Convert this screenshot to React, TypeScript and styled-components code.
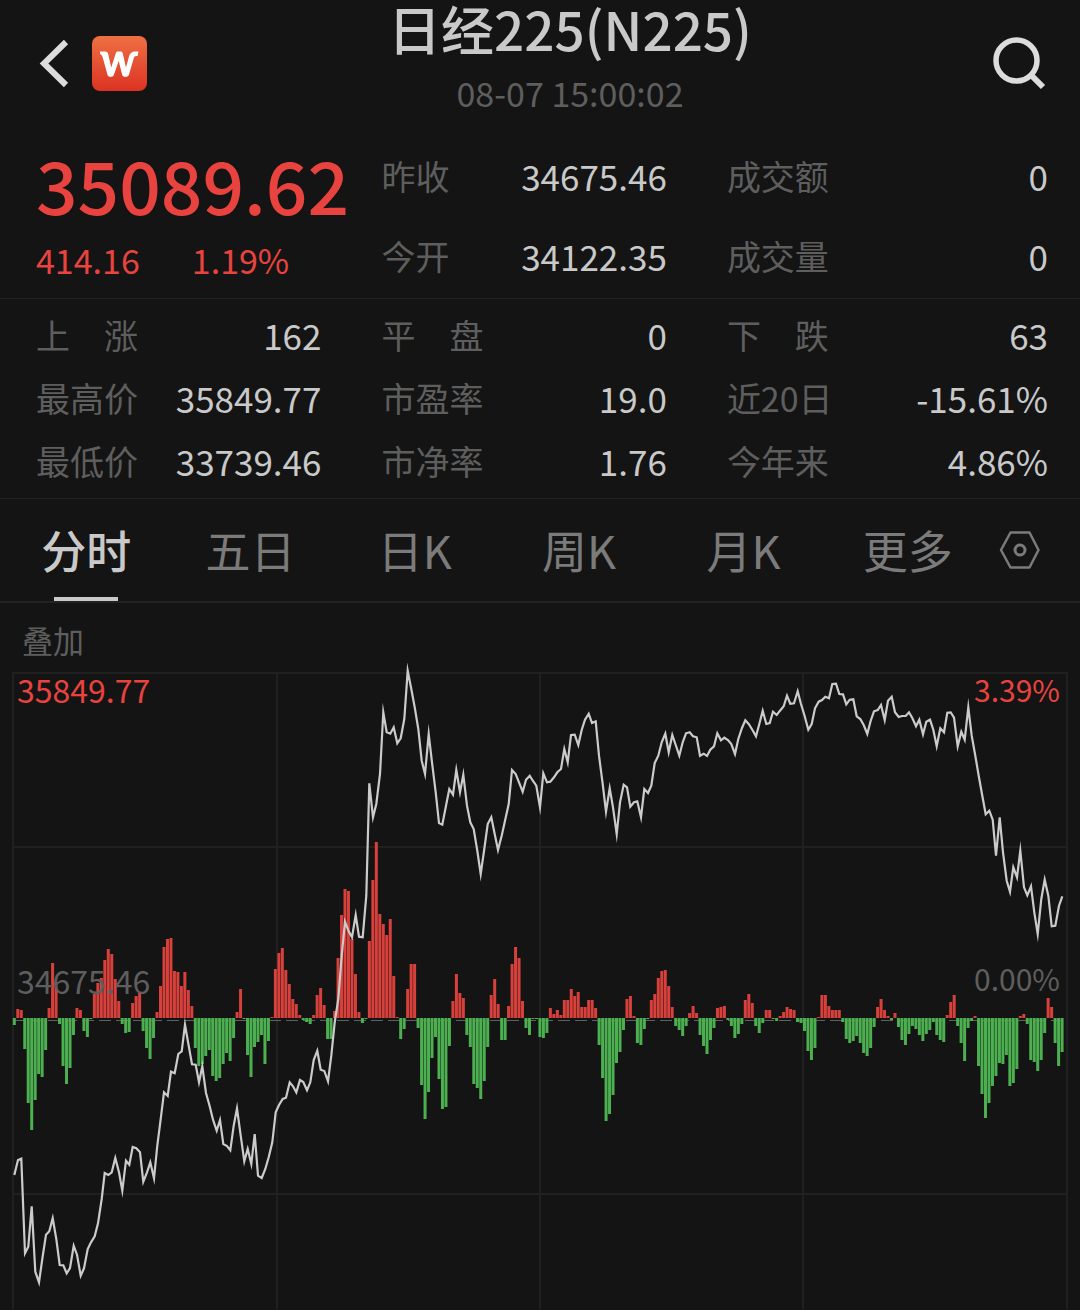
import React from 'react';
import styled, { createGlobalStyle } from 'styled-components';

const color = {
  bg: '#141414',
  line: '#222222',
  text: '#c9c9c9',
  icon: '#dcdcdc',
  tab: '#7b7b7b',
  label: '#5e5e5e',
  up: '#e8433f',
  bar: '#d8403b',
  down: '#4cb050',
};

const fontStack = '"Noto Sans CJK SC", "Noto Sans", sans-serif';

const GlobalStyle = createGlobalStyle`
  * { box-sizing: border-box; }
  body { margin: 0; background: ${color.bg}; }
  button {
    margin: 0;
    padding: 0;
    border: 0;
    background: none;
    color: inherit;
    font: inherit;
    cursor: pointer;
  }
`;

const Page = styled.main`
  background: ${color.bg};
  color: ${color.text};
  font-family: ${fontStack};
`;

const Header = styled.header`
  display: flex;
  align-items: center;
  padding: 0 32px 10px 36px;
`;

const IconButton = styled.button<{ $width: number }>`
  display: flex;
  flex: none;
  width: ${(p) => p.$width}px;
`;

const Heading = styled.div`
  display: grid;
  flex: 1;
  row-gap: 4px;
  text-align: center;
  white-space: nowrap;
`;

const Title = styled.h1`
  margin: 0;
  font-size: 53px;
  font-weight: 500;
  line-height: 56px;
`;

const Timestamp = styled.time`
  color: ${color.label};
  font-size: 34px;
  line-height: 66px;
`;

const Section = styled.section<{ $top: number; $bottom: number }>`
  display: grid;
  grid-template-columns: 8fr 8fr 9fr;
  column-gap: 60px;
  padding: ${(p) => p.$top}px 32px ${(p) => p.$bottom}px 36px;
  border-bottom: 1px solid ${color.line};
`;

const Quote = styled.div`
  display: grid;
  align-content: start;
  row-gap: 6px;
  min-width: 0;
  color: ${color.up};
  white-space: nowrap;
`;

const Price = styled.div`
  font-size: 73px;
  font-weight: 500;
  line-height: 94px;
`;

const Change = styled.div`
  display: flex;
  gap: 52px;
  font-size: 34px;
  line-height: 48px;
`;

const Stats = styled.dl<{ $row: number }>`
  min-width: 0;
  margin: 0;
  line-height: ${(p) => p.$row}px;
`;

const Stat = styled.div`
  display: flex;
  justify-content: space-between;
  white-space: nowrap;
`;

const StatName = styled.dt`
  color: ${color.label};
  font-size: 34px;
`;

const StatValue = styled.dd`
  margin: 0;
  font-size: 35px;
`;

const TabBar = styled.nav`
  display: flex;
  padding: 0 30px 0 4px;
  border-bottom: 2px solid ${color.line};
`;

const Tabs = styled.div`
  display: grid;
  flex: 1;
  grid-template-columns: repeat(6, 1fr);
`;

const Tab = styled.button<{ $active: boolean }>`
  position: relative;
  color: ${(p) => (p.$active ? color.text : color.tab)};
  font-size: 45px;
  font-weight: ${(p) => (p.$active ? 500 : 400)};
  line-height: 102px;
  white-space: nowrap;

  &::after {
    content: '';
    position: absolute;
    bottom: 0;
    left: calc(50% - 32px);
    width: 64px;
    height: 4px;
    background: ${(p) => (p.$active ? color.text : 'transparent')};
  }
`;

const SettingsButton = styled(IconButton)`
  align-items: center;
  justify-content: center;
`;

const Overlay = styled.button`
  display: block;
  margin-left: 22px;
  padding-top: 14px;
  color: ${color.label};
  font-size: 31px;
  line-height: 46px;
`;

const Chart = styled.svg`
  display: block;
  width: 100%;
  height: auto;
`;

const AxisText = styled.text<{ $tone: 'up' | 'flat'; $side: 'left' | 'right' }>`
  fill: ${(p) => (p.$tone === 'up' ? color.up : color.label)};
  font-size: ${(p) => (p.$side === 'left' ? 32 : 30)}px;
  text-anchor: ${(p) => (p.$side === 'left' ? 'start' : 'end')};
`;

type Pair = [string, string];

const dayStats: Pair[][] = [
  [['昨收', '34675.46'], ['今开', '34122.35']],
  [['成交额', '0'], ['成交量', '0']],
];

const indexStats: Pair[][] = [
  [['上　涨', '162'], ['最高价', '35849.77'], ['最低价', '33739.46']],
  [['平　盘', '0'], ['市盈率', '19.0'], ['市净率', '1.76']],
  [['下　跌', '63'], ['近20日', '-15.61%'], ['今年来', '4.86%']],
];

const periods = ['分时', '五日', '日K', '周K', '月K', '更多'];

/* Momentum bars, one per tick: positive above the previous close, negative below. */
const momentum = [
  -7, 9, 8, -31, -85, -112, -82, -56, -59, -32, 10, 55, 36, -6, -48, -66, -50, -17, 10, 8,
  -13, -19, 0, 24, 35, 40, 58, 69, 64, 39, 17, -6, -15, -14, 15, 22, 25, -13, -30, -41,
  -20, 6, 32, 71, 79, 80, 47, 46, 32, 46, 28, 12, -30, -48, -46, -38, -32, -58, -63, -60,
  -46, -35, -43, -20, 6, 29, 0, -37, -59, -29, -24, -17, -46, -23, 1, 49, 65, 70, 48, 34,
  19, 14, 3, -2, -4, -6, 3, 23, 30, 13, -21, -21, 7, 60, 103, 129, 127, 79, 44, 6,
  -5, 0, 77, 138, 176, 104, 94, 83, 99, 42, 1, -21, -11, 29, 54, 54, -10, -67, -101, -74,
  -40, -19, -61, -91, -89, -28, 17, 44, 25, 20, -17, -29, -66, -70, -81, -63, -29, 23, 39, 14,
  -22, -22, 12, 54, 71, 60, 17, -10, -17, -1, -1, -19, -20, -15, 10, 4, 8, 3, 18, 18,
  29, 22, 26, 11, 11, 18, 18, 10, -27, -60, -103, -96, -77, -45, -34, -12, 19, 22, 2, -25,
  -27, -11, -1, 18, 24, 40, 47, 48, 32, 11, -8, -12, -18, -8, 5, 12, 5, -17, -28, -36,
  -22, -10, 10, 11, 12, -2, -8, -20, -16, -6, 18, 24, 15, -8, -15, -5, 8, 8, -1, -3,
  2, 6, 11, 9, 8, -4, -5, -13, -33, -42, -30, 1, 23, 23, 12, 8, 8, 8, -4, -21,
  -25, -23, -18, -25, -35, -38, -30, -9, 11, 19, 8, 2, -2, 5, -9, -22, -27, -16, -8, -11,
  -17, -23, -16, -12, -4, -17, -22, -24, 3, 16, 23, -8, -25, -43, -10, -3, 2, -48, -76, -100,
  -85, -68, -58, -45, -46, -37, -68, -65, -51, 2, 4, -6, -42, -44, -53, -42, -15, 20, 11, -25,
  -48, -34,
];

/* Price trace in thirds of a chart unit, split into stretches that each have their own origin. */
const trace = [
  {
    x: 0,
    y: 286,
    points:
      '43,678 54,633 64,629 75,913 85,893 95,772 106,968 117,1000 127,930 138,857 148,847 158,808 169,870 179,948 190,949 200,973 210,957 221,890 231,917 242,980 252,958 263,900 273,880 284,862 294,823 305,750 314,672 325,678 335,670 346,627 357,670 367,725 378,635 388,647 398,594 409,598 420,610 430,698 441,670 451,640 462,688 472,590 482,510 492,430 503,441 513,368 524,373 535,315 545,307 555,227 566,290 576,346 587,347 597,400 607,352 618,432 629,472 639,512 650,545 660,513 670,585 681,591 691,604 701,530 711,478 722,560 733,637 743,600 754,645 764,555 774,680',
  },
  {
    x: 260,
    y: 216,
    points:
      '5,897 16,870 26,835 37,790 47,700 57,678 68,660 78,656 89,610 99,622 109,640 120,603 130,609 141,634 151,610 161,543 172,515 182,572 193,576 204,607 214,530 224,430 235,360 245,230 255,128 266,157 276,175 287,108 297,173',
  },
  {
    x: 260,
    y: -4,
    points:
      '308,835 319,710 328,373 339,475 349,435 360,345 370,160 380,220 391,224 401,205 412,253 422,238 433,180 443,35 454,90 464,145 475,210 485,305 495,345 506,225 516,310 527,400 537,492 547,497 558,440 568,390 579,407 589,333 600,400 610,347 621,440 631,490 641,510 652,575 662,645 673,570 683,495 694,475 704,525 714,573 725,530 735,485 746,435 756,333 767,345 777,370 788,398 798,362',
  },
  {
    x: 530,
    y: -4,
    points:
      '-1,350 9,366 19,380 30,445 40,343 51,370 61,368 72,355 82,340 93,330 103,270 113,310 123,228 134,227 145,258 155,213 165,182 176,164 186,192 197,187 207,290 218,375 228,458 239,388 249,445 260,525 270,430 281,377 291,385 301,443 312,430 322,427 333,475 343,390 354,402 364,380 374,312 385,290 395,250 406,224 416,280 427,228 437,258 448,290 458,250 468,223 479,220 489,232 500,235 510,290 521,284 531,291 541,272 552,262 562,223 573,244 583,236 594,243 604,255 615,285 625,240 636,207 646,184 656,195 667,212 678,232 688,195 698,155 709,195 719,192 729,158 740,168 750,155 761,142 771,110 781,134 792,133 803,97',
  },
  {
    x: 800,
    y: -4,
    points:
      '3,135 14,172 25,212 35,195 45,148 56,128 66,123 76,113 87,118 97,75 108,74 118,105 129,106 139,136 149,122 160,121 170,172 181,180 191,198 202,225 212,185 222,157 233,153 243,138 254,183 264,125 275,113 285,160 296,174 306,171 317,171 327,160 337,177 348,202 358,182 369,226 379,188 390,182 400,212 410,262 421,208 432,220 442,161 452,160 462,176 473,262 484,218 494,242 505,145 515,230 525,285 536,350 547,410 557,466 568,455 578,482 588,590 599,475 609,580 620,665 630,698 640,625 651,655 661,575 672,685 682,709 693,682 703,760 713,825 724,720 734,662 745,710 755,802 766,800 777,740 787,712',
  },
];

const priceLine = trace
  .flatMap((part) =>
    part.points.split(' ').map((pair) => {
      const [x, y] = pair.split(',').map(Number);
      return `${(part.x + x / 3).toFixed(1)},${(part.y + y / 3).toFixed(1)}`;
    }),
  )
  .join(' ');

const BASE = 355;
const FIRST_TICK = 14.3;
const TICK = 3.481;

function StatColumn({ items, row }: { items: Pair[]; row: number }) {
  return (
    <Stats $row={row}>
      {items.map(([name, value]) => (
        <Stat key={name}>
          <StatName>{name}</StatName>
          <StatValue>{value}</StatValue>
        </Stat>
      ))}
    </Stats>
  );
}

function BackIcon() {
  return (
    <svg width="36" height="56" viewBox="0 0 36 56" fill="none" stroke={color.icon} strokeWidth="6">
      <path d="M30 7 8 28.500 30 50" />
    </svg>
  );
}

function Logo() {
  return (
    <svg width="55" height="55" viewBox="0 0 55 55" fill="none" aria-hidden="true">
      <defs>
        <linearGradient id="logo" x1="0" y1="0" x2="0" y2="1">
          <stop offset="0" stopColor="#ee7043" />
          <stop offset="1" stopColor="#dc3323" />
        </linearGradient>
      </defs>
      <rect width="55" height="55" rx="8" fill="url(#logo)" />
      <path
        d="M8 15.500H13C15 15.500 15.800 16.500 16.200 18L19.200 31.500 23.700 17.500C24.200 16 25 15.500 26 15.500H28.500C29.800 15.500 30.400 16 30.800 17.500L34 31.500 37 20.500C38 17 40 15.500 43 15.500H46.500L45.500 20H44C42.800 20 42.200 20.700 41.800 22L37 38.500C36.500 40 35.700 40.700 34.500 40.700H32.500C31.200 40.700 30.500 40 30.100 38.500L26.700 25 22 38.500C21.500 40 20.700 40.700 19.500 40.700H17.800C16.500 40.700 15.800 40 15.400 38.500L10.600 21C10.200 19.500 9.500 18.500 8 18Z"
        fill="#fff"
      />
    </svg>
  );
}

function SearchIcon() {
  return (
    <svg width="55" height="56" viewBox="0 0 55 56" fill="none" stroke={color.icon}>
      <circle cx="23.500" cy="25.500" r="20.500" strokeWidth="5.500" />
      <path d="M38 40 50 52" strokeWidth="6" />
    </svg>
  );
}

function SettingsIcon() {
  return (
    <svg width="42" height="40" viewBox="0 0 42 40" fill="none" stroke={color.tab} strokeWidth="2.500">
      <path d="M11.500 2.500H30.500L39.500 20 30.500 37.500H11.500L2 20Z" strokeLinejoin="round" />
      <circle cx="21" cy="20" r="5" strokeWidth="3" />
    </svg>
  );
}

function PriceChart() {
  return (
    <Chart viewBox="0 0 1080 646" role="img" aria-label="分时走势">
      <g stroke="#202020" strokeWidth="2">
        {[10, 184, 531].map((y) => (
          <line key={y} x1="12" x2="1068" y1={y} y2={y} />
        ))}
        {[13, 277, 540, 803, 1067].map((x) => (
          <line key={x} x1={x} x2={x} y1="9" y2="646" />
        ))}
      </g>
      <line x1="14" x2="1064" y1="357.500" y2="357.500" stroke="#606060" strokeWidth="1" strokeDasharray="12 5" />
      {momentum.map((value, i) => (
        <rect
          key={i}
          x={FIRST_TICK + i * TICK - 1.5}
          y={value > 0 ? BASE - value : BASE}
          width="3"
          height={Math.max(Math.abs(value), 1)}
          fill={value > 0 ? color.bar : color.down}
        />
      ))}
      <polyline points={priceLine} fill="none" stroke="#cbcbcb" strokeWidth="2.2" strokeMiterlimit="10" />
      <AxisText $tone="up" $side="left" x="17" y="40">35849.77</AxisText>
      <AxisText $tone="up" $side="right" x="1060" y="39">3.39%</AxisText>
      <AxisText $tone="flat" $side="left" x="17" y="331">34675.46</AxisText>
      <AxisText $tone="flat" $side="right" x="1060" y="328">0.00%</AxisText>
    </Chart>
  );
}

export default function App() {
  return (
    <Page>
      <GlobalStyle />
      <Header>
        <IconButton $width={56} aria-label="返回">
          <BackIcon />
        </IconButton>
        <Logo />
        <Heading>
          <Title>日经225(N225)</Title>
          <Timestamp>08-07 15:00:02</Timestamp>
        </Heading>
        <IconButton $width={55} aria-label="搜索">
          <SearchIcon />
        </IconButton>
      </Header>

      <Section $top={0} $bottom={2}>
        <Quote>
          <Price>35089.62</Price>
          <Change>
            <span>414.16</span>
            <span>1.19%</span>
          </Change>
        </Quote>
        {dayStats.map((items) => (
          <StatColumn key={items[0][0]} items={items} row={80} />
        ))}
      </Section>

      <Section $top={4} $bottom={6}>
        {indexStats.map((items) => (
          <StatColumn key={items[0][0]} items={items} row={63} />
        ))}
      </Section>

      <TabBar>
        <Tabs>
          {periods.map((name, i) => (
            <Tab key={name} $active={i === 0} aria-pressed={i === 0}>
              {name}
            </Tab>
          ))}
        </Tabs>
        <SettingsButton $width={60} aria-label="设置">
          <SettingsIcon />
        </SettingsButton>
      </TabBar>

      <Overlay>叠加</Overlay>
      <PriceChart />
    </Page>
  );
}
